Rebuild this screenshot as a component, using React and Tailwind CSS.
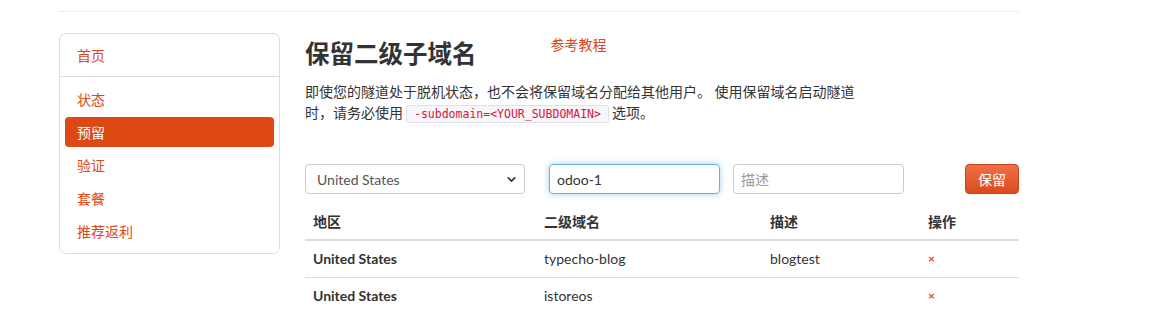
import { ChevronDown } from 'lucide-react'

const font = { fontFamily: 'Lato, "Noto Sans CJK SC", sans-serif' }

const navItems = ['状态', '预留', '验证', '套餐', '推荐返利']

const rows = [
  { region: 'United States', sub: 'typecho-blog', desc: 'blogtest' },
  { region: 'United States', sub: 'istoreos', desc: '' },
]

function Sidebar() {
  return (
    <div className="w-[221px] shrink-0 mt-[21px] h-[221px] rounded-[7px] border border-[#dddddd] bg-white">
      <div className="h-[43px] flex items-center px-[17px] text-[14px] text-[#dd4814] border-b border-[#dddddd]">首页</div>
      <div className="pt-[7px] px-[5px]">
        {navItems.map(item => (
          <div
            key={item}
            className={
              item === '预留'
                ? 'h-[30px] mt-[3px] first:mt-0 flex items-center px-[12px] text-[14px] rounded-[4px] bg-[#dd4814] text-white'
                : 'h-[30px] mt-[3px] first:mt-0 flex items-center px-[12px] text-[14px] text-[#dd4814]'
            }
          >
            {item}
          </div>
        ))}
      </div>
    </div>
  )
}

export default function App() {
  return (
    <div className="w-[1173px] h-[325px] bg-white overflow-hidden text-[#333333]" style={font}>
      <div className="w-[960px] ml-[59px] pt-[11px]">
        <div className="h-px bg-[#eeeeee]" />
        <div className="flex gap-[25px]">
          <Sidebar />

          <div className="flex-1">
            {/* Heading */}
            <div className="flex items-start mt-[27px]">
              <h2 className="text-[24.5px] leading-[30px] font-bold text-[#333333]">保留二级子域名</h2>
              <a className="ml-[74px] mt-[-5px] text-[14px] text-[#dd4814]">参考教程</a>
            </div>

            <p className="mt-[12px] text-[14px] leading-[21px] text-[#333333]">
              即使您的隧道处于脱机状态，也不会将保留域名分配给其他用户。 使用保留域名启动隧道
              <br />
              时，请务必使用
              <code
                className="mx-[3px] px-[7px] py-[1px] text-[11.5px] rounded-[3px] border border-[#e1e1e8] bg-[#f7f7f9] text-[#dd1144]"
                style={{ fontFamily: '"DejaVu Sans Mono", monospace' }}
              >
                -subdomain=&lt;YOUR_SUBDOMAIN&gt;
              </code>
              选项。
            </p>

            {/* Form */}
            <div className="flex items-center mt-[39px] h-[30px]">
              <div className="w-[220px] h-[30px] flex items-center justify-between pl-[11px] pr-[6px] border border-[#cccccc] rounded-[4px] text-[14px] text-[#555555]">
                <span>United States</span>
                <ChevronDown className="w-[13px] h-[13px] text-[#333333]" strokeWidth={3} />
              </div>
              <div className="ml-[24px] w-[171px] h-[30px] flex items-center px-[7px] border border-[#66afe9] rounded-[4px] text-[14px] text-[#333333] shadow-[0_0_6px_rgba(102,175,233,0.6)]">
                odoo-1
              </div>
              <div className="ml-[13px] w-[171px] h-[30px] flex items-center px-[7px] border border-[#cccccc] rounded-[4px] text-[14px] text-[#999999]">
                描述
              </div>
              <button className="ml-[61px] w-[54px] h-[30px] rounded-[4px] text-[14px] text-white border border-[#c8431a] bg-gradient-to-b from-[#ef7048] to-[#dc4a18]">
                保留
              </button>
            </div>

            {/* Table */}
            <table className="w-full mt-[10px] text-[14px] border-collapse">
              <thead>
                <tr className="border-b-2 border-[#dddddd]">
                  <th className="w-[231px] text-left font-bold px-[8px] h-[36px]">地区</th>
                  <th className="w-[226px] text-left font-bold px-[8px]">二级域名</th>
                  <th className="w-[158px] text-left font-bold px-[8px]">描述</th>
                  <th className="text-left font-bold px-[8px]">操作</th>
                </tr>
              </thead>
              <tbody>
                {rows.map(r => (
                  <tr key={r.sub} className="border-b border-[#dddddd] last:border-b-0">
                    <td className="px-[8px] h-[37px] font-bold">{r.region}</td>
                    <td className="px-[8px]">{r.sub}</td>
                    <td className="px-[8px]">{r.desc}</td>
                    <td className="px-[8px] text-[12px] font-bold text-[#dd4814]">×</td>
                  </tr>
                ))}
              </tbody>
            </table>
          </div>
        </div>
      </div>
    </div>
  )
}
